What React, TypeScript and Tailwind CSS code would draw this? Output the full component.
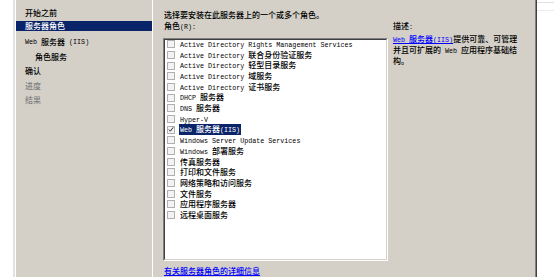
import React from "react";

const roles = [
  "Active Directory Rights Management Services",
  "Active Directory 联合身份验证服务",
  "Active Directory 轻型目录服务",
  "Active Directory 域服务",
  "Active Directory 证书服务",
  "DHCP 服务器",
  "DNS 服务器",
  "Hyper-V",
  "Web 服务器(IIS)",
  "Windows Server Update Services",
  "Windows 部署服务",
  "传真服务器",
  "打印和文件服务",
  "网络策略和访问服务",
  "文件服务",
  "应用程序服务器",
  "远程桌面服务",
];

const navItems = [
  { label: "开始之前", cls: "h-[12px] mt-[7px] pl-[9px]" },
  { label: "服务器角色", cls: "h-[10px] mt-[2px] pl-[9px] bg-[#0a246a] text-white" },
  { label: "Web 服务器 (IIS)", cls: "h-[12px] mt-[5px] pl-[9px]" },
  { label: "角色服务", cls: "h-[12px] mt-[3px] pl-[19px]" },
  { label: "确认", cls: "h-[12px] mt-[2px] pl-[9px]" },
  { label: "进度", cls: "h-[12px] mt-[3px] pl-[9px] text-[#808080]" },
  { label: "结果", cls: "h-[12px] mt-[2px] pl-[9px] text-[#808080]" },
];

// latin runs are half-width like SimSun, CJK keeps the full 8px
const Mixed = ({ text }: { text: string }) => {
  const parts = text.split(/([\u0000-\u00ff]+)/).filter(Boolean);
  return (
    <>
      {parts.map((p, i) =>
        /^[\u0000-\u00ff]+$/.test(p) ? (
          <span key={i} className="font-['Liberation_Mono',monospace] text-[6.7px] whitespace-pre">
            {p}
          </span>
        ) : (
          <span key={i} className="font-medium">{p}</span>
        )
      )}
    </>
  );
};

const CheckBox = ({ checked }: { checked?: boolean }) => (
  <div className="w-[8px] h-[8px] shrink-0 border border-[#b0b0b0] bg-[#f3f3f3] flex items-center justify-center">
    {checked && (
      <svg width="7" height="7" viewBox="0 0 7 7">
        <path d="M1 3.5 L2.8 5.5 L6 1" stroke="#222" strokeWidth="1.1" fill="none" />
      </svg>
    )}
  </div>
);

export default function App() {
  return (
    <div className="w-[554px] h-[277px] flex bg-[#d4d0c8] text-black text-[8px] leading-[10px] font-['Noto_Sans_CJK_SC',sans-serif] overflow-hidden">
      <div className="w-[13px] bg-white" />
      <div className="w-[140px] flex border-l-2 border-l-[#e4e2de] border-r border-r-white">
        <div className="flex-1 border-l border-l-white flex flex-col">
          {navItems.map((n) => (
            <div key={n.label} className={`flex items-center ${n.cls}`}>
              <Mixed text={n.label} />
            </div>
          ))}
        </div>
      </div>
      <div className="w-[382px] flex flex-col pl-[11px] pt-[10px]">
        <div>
          <Mixed text="选择要安装在此服务器上的一个或多个角色。" />
        </div>
        <div className="flex mt-[1px]">
          <div className="flex flex-col -ml-px">
            <div className="pl-px">
              <Mixed text="角色(R):" />
            </div>
            <div className="mt-[6px] w-[225px] h-[223px] border border-t-[#808080] border-l-[#808080] border-b-white border-r-white">
              <div className="w-full h-full border border-t-[#404040] border-l-[#404040] border-b-[#d4d0c8] border-r-[#d4d0c8] bg-white pl-[2px]">
                <div className="-mt-[1px]">
                  {roles.map((r) => {
                    const sel = r === "Web 服务器(IIS)";
                    return (
                      <div key={r} className="h-[10.68px] flex items-center gap-[5px] whitespace-nowrap">
                        <CheckBox checked={sel} />
                        <span className={sel ? "bg-[#0a246a] text-white px-px -ml-px" : ""}>
                          <Mixed text={r} />
                        </span>
                      </div>
                    );
                  })}
                </div>
              </div>
            </div>
            <div className="mt-[5px] pl-px">
              <span className="text-[#0000ff] underline">
                <Mixed text="有关服务器角色的详细信息" />
              </span>
            </div>
          </div>
          <div className="ml-[5px] w-[135px] flex flex-col">
            <div>
              <Mixed text="描述:" />
            </div>
            <div className="mt-[2px] whitespace-nowrap">
              <span className="text-[#0000ff] underline">
                <Mixed text="Web 服务器(IIS)" />
              </span>
              <Mixed text="提供可靠、可管理" />
            </div>
            <div className="whitespace-nowrap">
              <Mixed text="并且可扩展的 Web 应用程序基础结" />
            </div>
            <div>
              <Mixed text="构。" />
            </div>
          </div>
        </div>
      </div>
      <div className="w-[2px] bg-[#808080] border-r border-r-[#404040]" />
      <div className="flex-1 bg-white flex flex-col">
        <div className="h-[3px] border-b border-b-[#e0e0e0]" />
        <div className="h-[8px] border-b border-b-[#ececec]" />
      </div>
    </div>
  );
}
